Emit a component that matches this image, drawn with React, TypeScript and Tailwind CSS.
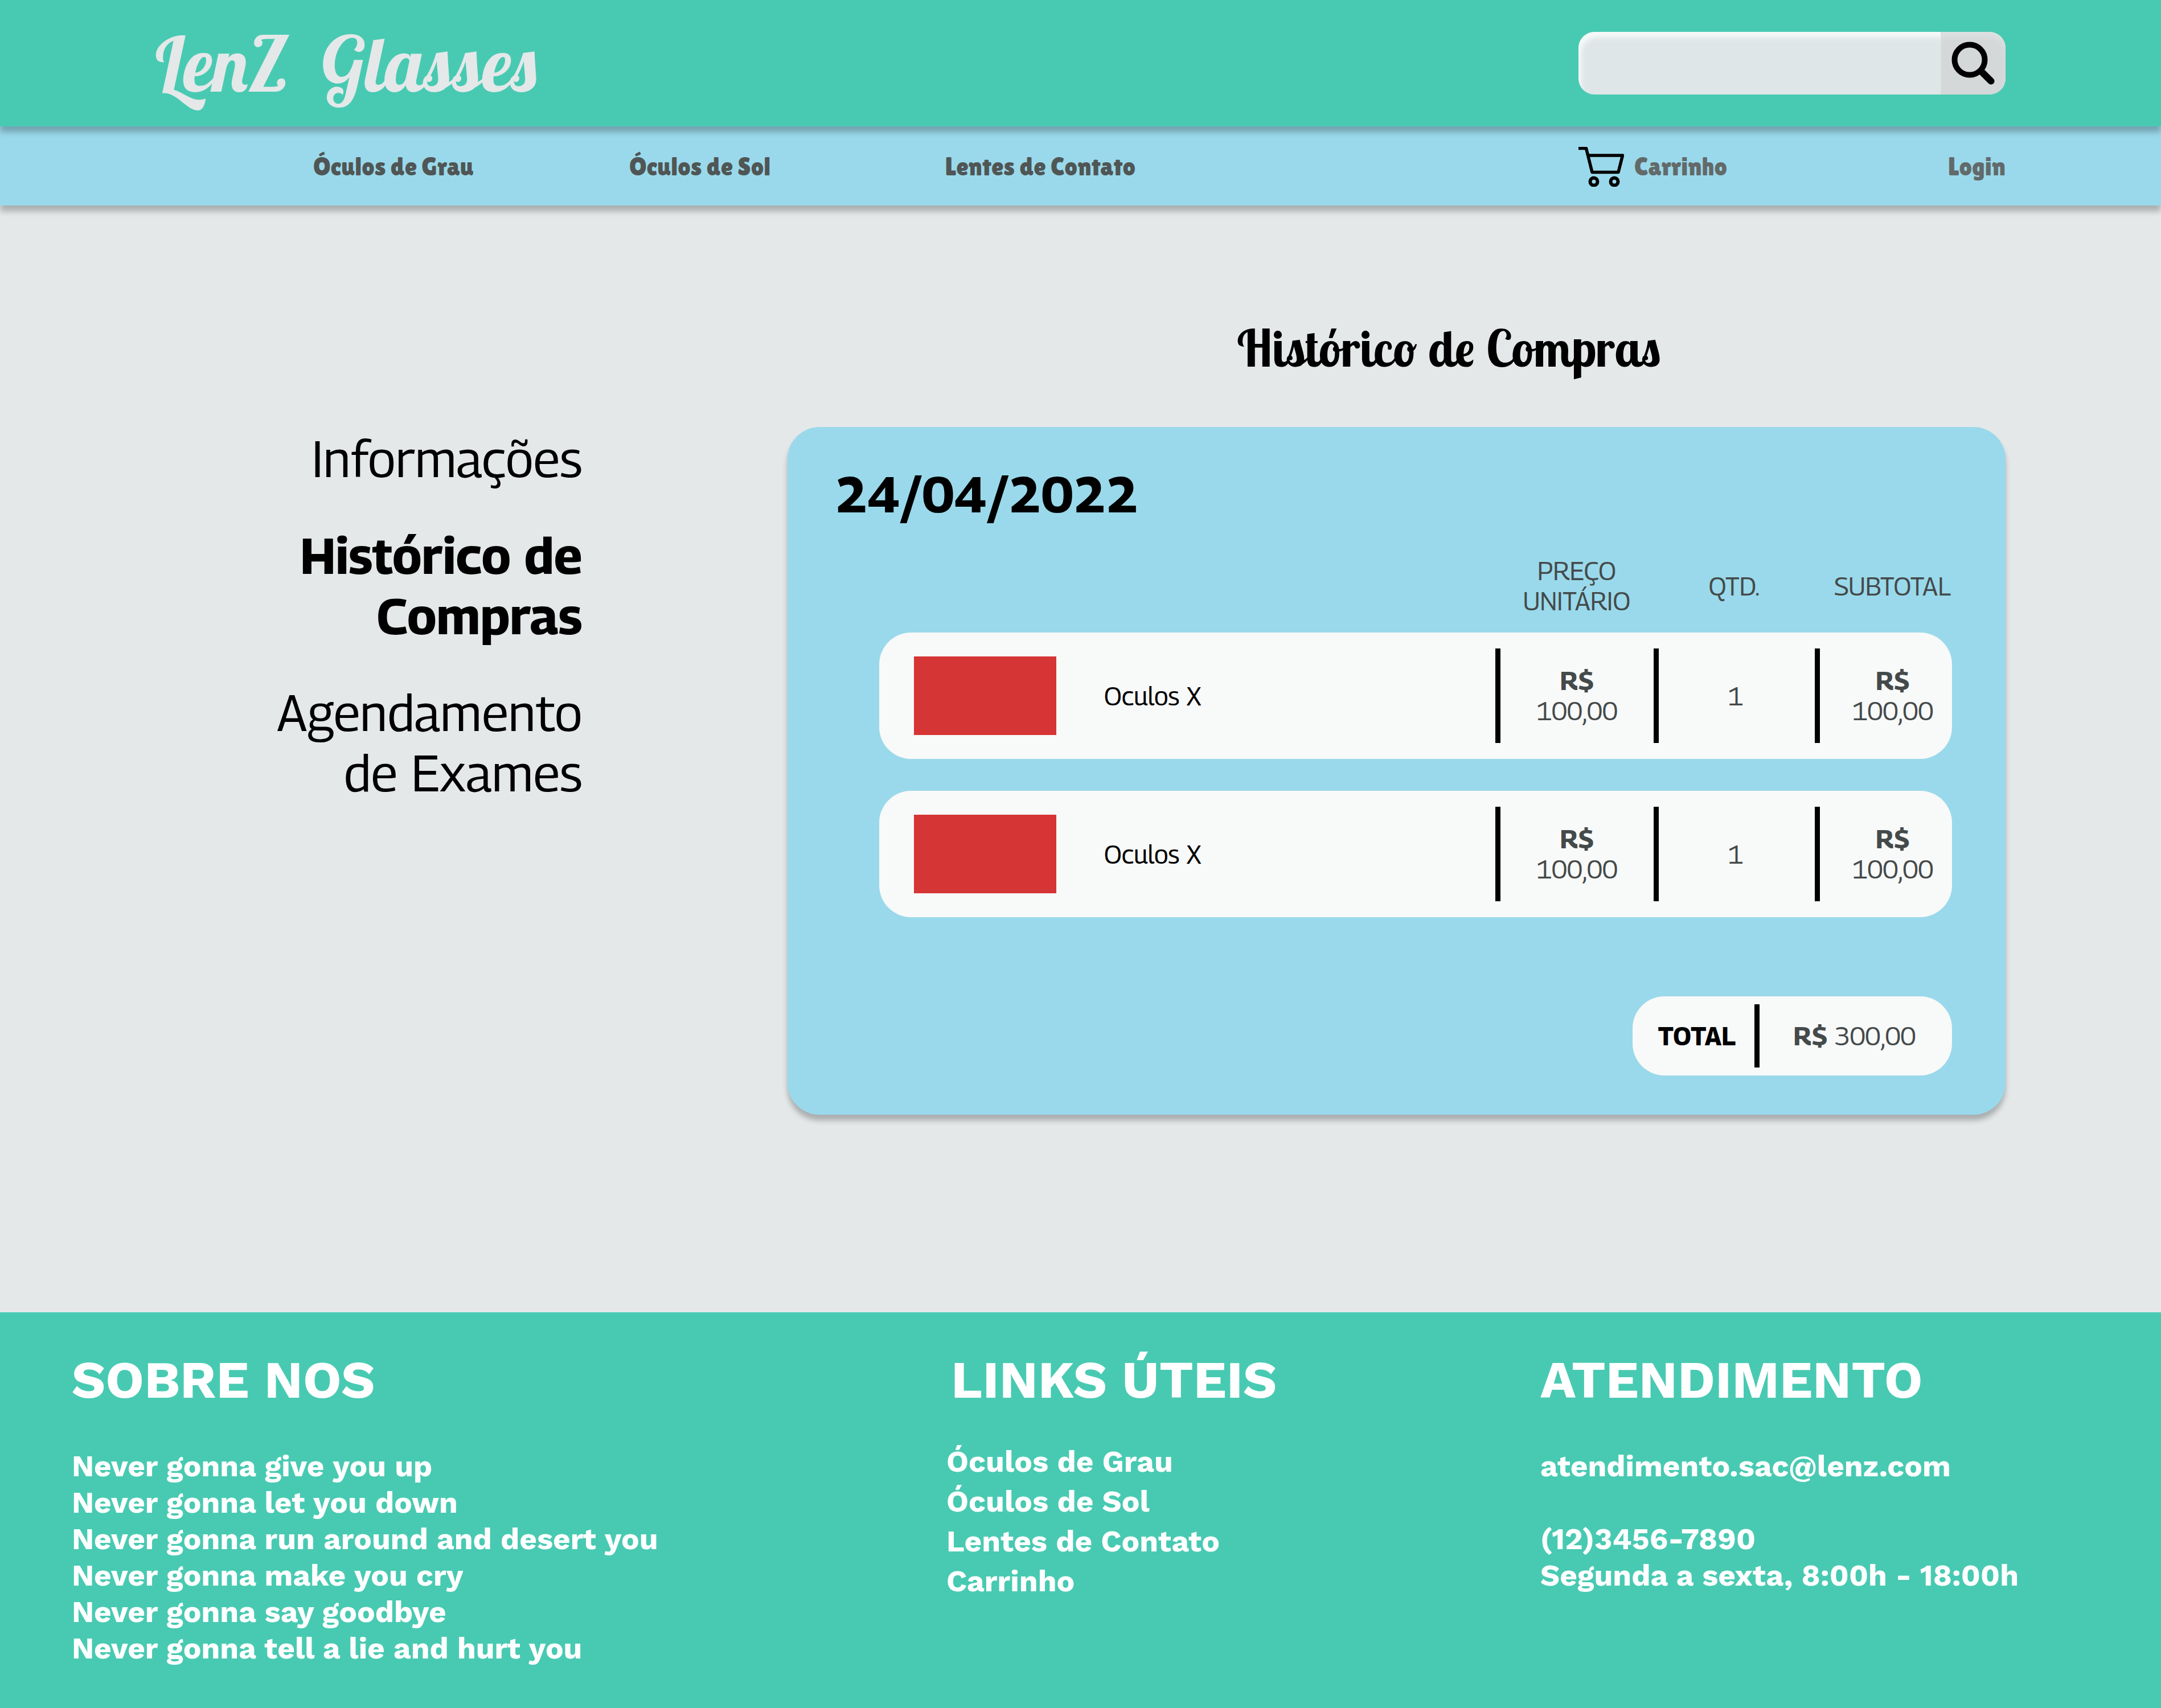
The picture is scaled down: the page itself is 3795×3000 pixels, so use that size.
const navLinks = ["Óculos de Grau", "Óculos de Sol", "Lentes de Contato"];

const items = [
  { id: 1, name: "Oculos X", price: "100,00", qty: 1, subtotal: "100,00" },
  { id: 2, name: "Oculos X", price: "100,00", qty: 1, subtotal: "100,00" },
];

const about = [
  "Never gonna give you up",
  "Never gonna let you down",
  "Never gonna run around and desert you",
  "Never gonna make you cry",
  "Never gonna say goodbye",
  "Never gonna tell a lie and hurt you",
];

const usefulLinks = ["Óculos de Grau", "Óculos de Sol", "Lentes de Contato", "Carrinho"];

function SearchIcon() {
  return (
    <svg viewBox="0 0 76 76" className="size-[76px]" fill="none" stroke="#000" aria-hidden="true">
      <circle cx="32" cy="32" r="26.5" strokeWidth="10" />
      <path d="M55 55 L69.5 69.5" strokeWidth="12" strokeLinecap="round" />
      <path d="M50 50 L56 56" strokeWidth="10" />
    </svg>
  );
}

function CartIcon() {
  return (
    <svg viewBox="0 0 80 70" className="h-[70px] w-[80px]" fill="none" stroke="#000" aria-hidden="true">
      <path d="M0 2.5 H13.5 L24 44.5 H70 L77.5 15 H17" strokeWidth="5.5" strokeLinejoin="round" />
      <circle cx="27" cy="61" r="6.5" strokeWidth="6" />
      <circle cx="63" cy="61" r="6.5" strokeWidth="6" />
    </svg>
  );
}

function Divider() {
  return <div className="h-[166px] w-[9px] shrink-0 bg-black" />;
}

function Header() {
  return (
    <header className="relative z-20 flex h-[222px] items-center justify-between bg-[#48cab2] px-[273px] shadow-[0_10px_10px_rgba(0,0,0,0.25)]">
      <a
        href="#"
        className="whitespace-pre font-['Lobster','Liberation_Serif',serif] text-[133px] leading-[160px] text-[#e4e8e9]"
      >
        LenZ  Glasses
      </a>
      <form
        role="search"
        onSubmit={(e) => e.preventDefault()}
        className="flex h-[110px] w-[750px] overflow-hidden rounded-[28px] bg-[#dee6e7]"
      >
        <input
          type="search"
          aria-label="Buscar"
          className="min-w-0 flex-1 rounded-l-[28px] px-8 text-[45px] outline-none shadow-[inset_5px_10px_10px_rgba(255,255,255,0.75)]"
        />
        <button
          type="submit"
          aria-label="Pesquisar"
          className="flex w-[114px] items-center justify-center rounded-r-[28px] bg-[#d5d8d9] shadow-[inset_0_10px_10px_rgba(255,255,255,0.2)]"
        >
          <SearchIcon />
        </button>
      </form>
    </header>
  );
}

function NavBar() {
  return (
    <nav className="relative z-10 flex h-[139px] items-center justify-between bg-[#9ad9eb] pt-[2px] pr-[273px] pl-[550px] font-['Lilita_One','Lato',sans-serif] text-[44px] leading-[53px] text-[#4f5655] shadow-[0_10px_10px_rgba(0,0,0,0.25)]">
      <ul className="grid grid-cols-[555px_555px_auto]">
        {navLinks.map((label) => (
          <li key={label}>
            <a href="#">{label}</a>
          </li>
        ))}
      </ul>
      <div className="flex w-[750px] items-center justify-between text-[#626a6a]">
        <a href="#" className="flex items-center gap-[18px]">
          <CartIcon />
          Carrinho
        </a>
        <a href="#">Login</a>
      </div>
    </nav>
  );
}

function Sidebar() {
  return (
    <aside className="w-[27%] pt-[391px] pr-0.5">
      <ul className="ml-auto flex w-[560px] flex-col gap-16 text-right text-[89px] leading-[106px]">
        <li>
          <a href="#">Informações</a>
        </li>
        <li>
          <a href="#" aria-current="page" className="font-bold">
            Histórico de Compras
          </a>
        </li>
        <li>
          <a href="#">Agendamento de Exames</a>
        </li>
      </ul>
    </aside>
  );
}

function Money({ value }: { value: string }) {
  return (
    <div>
      <b>R$</b>
      <br />
      {value}
    </div>
  );
}

function OrderCard() {
  return (
    <article className="rounded-[56px] bg-[#9ad9eb] pt-16 pr-[94px] pb-[69px] pl-[84px] shadow-[0_10px_10px_rgba(0,0,0,0.25)]">
      <h2 className="text-[89px] leading-[106px] font-bold">24/04/2022</h2>
      <div className="pl-[77px]">
        <table className="mt-14 w-full table-fixed text-center text-[45px] leading-[53px] text-[#444a4a]">
          <thead>
            <tr>
              <th scope="col" aria-label="Produto" />
              <th scope="col" className="w-[278px] px-0 pb-[29px] pl-2 font-normal">
                PREÇO
                <br />
                UNITÁRIO
              </th>
              <th scope="col" className="w-[283px] px-0 pb-[29px] font-normal">
                QTD.
              </th>
              <th scope="col" className="w-[241px] px-0 pb-[29px] pl-8 font-normal">
                SUBTOTAL
              </th>
            </tr>
          </thead>
          <tbody>
            {items.map((item) => (
              <tr key={item.id}>
                <td className="p-0 pb-14">
                  <div className="flex h-[222px] items-center gap-[84px] rounded-l-[56px] bg-[#f8f9f9] pl-[61px] text-black">
                    <div className="h-[138px] w-[250px] bg-[#d63535]" />
                    {item.name}
                  </div>
                </td>
                <td className="p-0 pb-14">
                  <div className="flex h-[222px] items-center bg-[#f8f9f9]">
                    <Divider />
                    <div className="flex-1">
                      <Money value={item.price} />
                    </div>
                  </div>
                </td>
                <td className="p-0 pb-14">
                  <div className="flex h-[222px] items-center bg-[#f8f9f9]">
                    <Divider />
                    <div className="flex-1 pr-1">{item.qty}</div>
                  </div>
                </td>
                <td className="p-0 pb-14">
                  <div className="flex h-[222px] items-center rounded-r-[56px] bg-[#f8f9f9]">
                    <Divider />
                    <div className="flex-1 pl-6">
                      <Money value={item.subtotal} />
                    </div>
                  </div>
                </td>
              </tr>
            ))}
          </tbody>
        </table>
      </div>
      <div className="mt-[83px] ml-auto flex h-[139px] w-[561px] items-center rounded-[56px] bg-[#f8f9f9] text-[45px] leading-[53px]">
        <div className="w-[214px] pl-3 text-center font-bold">TOTAL</div>
        <div className="h-[111px] w-[9px] bg-black" />
        <div className="flex-1 pr-1 text-center text-[#444a4a]">
          <b>R$</b> 300,00
        </div>
      </div>
    </article>
  );
}

function Footer() {
  return (
    <footer className="grid grid-cols-[1536fr_1043fr_964fr] bg-[#48cab2] px-[126px] pt-[68px] pb-[73px] font-['Work_Sans','Inter',sans-serif] text-[53px] leading-[64px] font-bold text-white">
      <section>
        <h2 className="text-[92px] leading-[100px]">SOBRE NOS</h2>
        <ul className="mt-[70px]">
          {about.map((line) => (
            <li key={line}>{line}</li>
          ))}
        </ul>
      </section>
      <section>
        <h2 className="pl-2 text-[92px] leading-[100px]">LINKS ÚTEIS</h2>
        <ul className="mt-[59px] leading-[70px]">
          {usefulLinks.map((label) => (
            <li key={label}>
              <a href="#">{label}</a>
            </li>
          ))}
        </ul>
      </section>
      <section>
        <h2 className="text-[92px] leading-[100px]">ATENDIMENTO</h2>
        <address className="mt-[70px] flex flex-col whitespace-nowrap not-italic">
          <a href="mailto:atendimento.sac@lenz.com">atendimento.sac@lenz.com</a>
          <a href="tel:+551234567890" className="mt-16">
            (12)3456-7890
          </a>
          <span>Segunda a sexta, 8:00h - 18:00h</span>
        </address>
      </section>
    </footer>
  );
}

export default function App() {
  return (
    <div className="flex min-h-screen flex-col bg-[#e4e8e9] font-['Georama','Open_Sans',sans-serif] text-black">
      <Header />
      <NavBar />
      <main className="flex flex-1 pb-[347px]">
        <Sidebar />
        <section className="mr-[273px] ml-[358px] flex-1 pt-[190px]">
          <h1 className="mb-[79px] pl-[184px] text-center font-['Lobster_Two','Liberation_Serif',serif] text-[89px] leading-[120px] font-bold">
            Histórico de Compras
          </h1>
          <OrderCard />
        </section>
      </main>
      <Footer />
    </div>
  );
}
